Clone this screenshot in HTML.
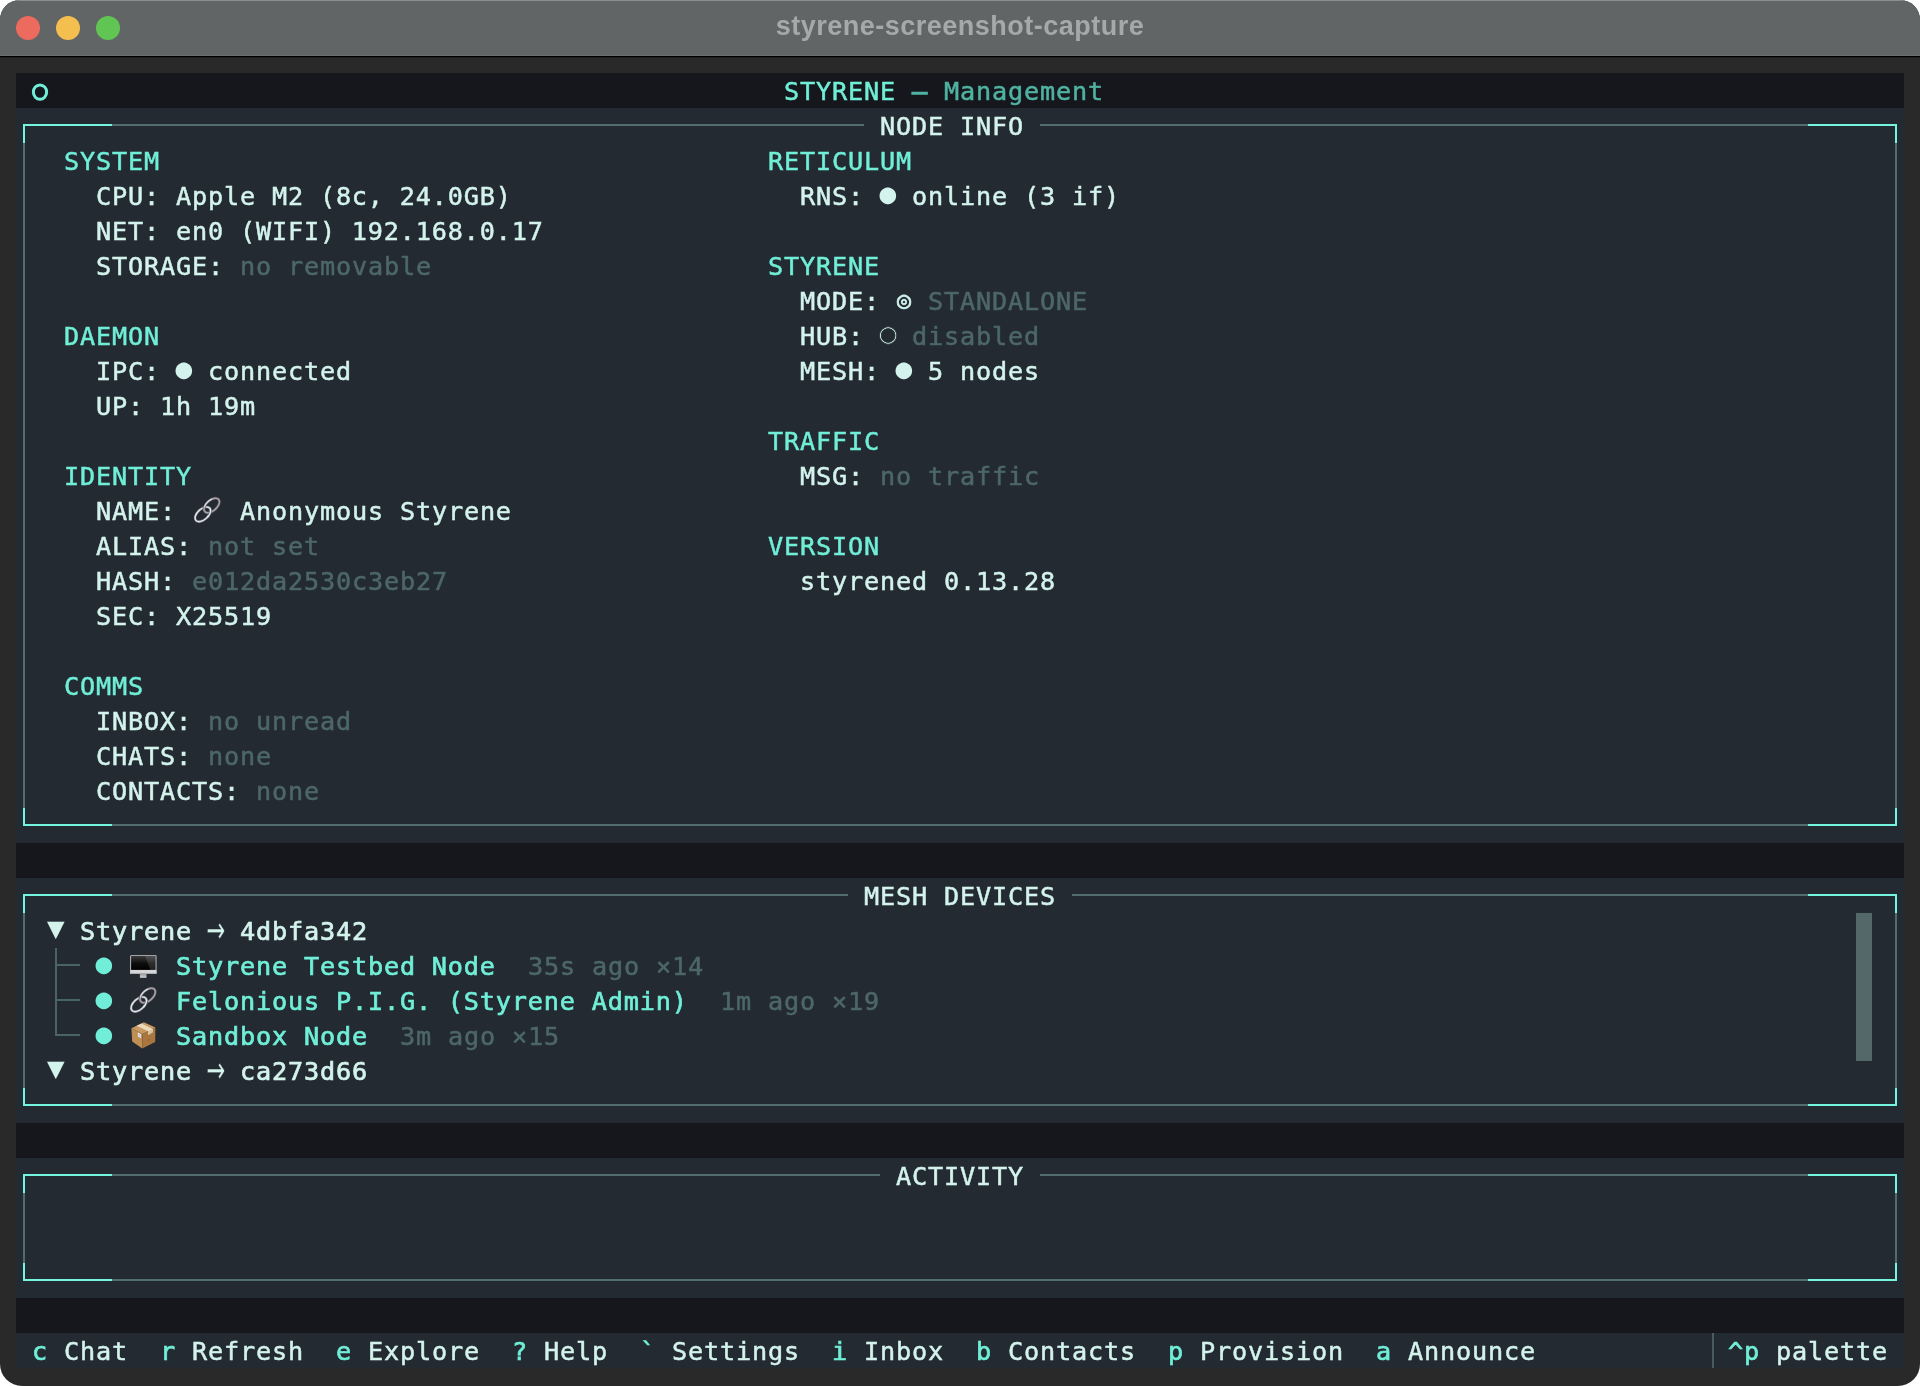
<!DOCTYPE html>
<html lang="en"><head><meta charset="utf-8"><title>styrene-screenshot-capture</title>
<style>
html,body{margin:0;padding:0;background:#fff}
body{width:1920px;height:1386px;overflow:hidden}
#win{position:absolute;left:0;top:0;width:1920px;height:1386px;background:#292929;border-radius:20px 20px 22px 22px;overflow:hidden}
#tb{position:absolute;left:0;top:0;width:1920px;height:56px;background:#616566;border-bottom:1px solid #000;box-shadow:inset 0 1px 0 #8d8f90,inset 0 -1px 0 #6b6f70}
#tb i{position:absolute;top:16px;width:24px;height:24px;border-radius:50%}
#ttl{position:absolute;left:0;top:0;width:1920px;height:56px;line-height:54px;text-align:center;font:bold 27px/53px "Liberation Sans",sans-serif;color:#a6a9aa;letter-spacing:0.5px;will-change:transform}
#term{position:absolute;left:16px;top:73px;width:1888px;height:1295px;background:#232a32;overflow:hidden;
 font-family:"DejaVu Sans Mono","Liberation Mono",monospace;font-size:25.2px;letter-spacing:0.828px;color:#d3f3ec}
.t{position:absolute;white-space:pre;height:35px;line-height:35px;margin-top:0.5px;-webkit-text-stroke:0.5px currentColor}
#txt{position:absolute;left:0;top:0;width:1888px;height:1295px;will-change:transform}
.cy{color:#70eed7}.cy2{color:#4fb3a2}.mu{color:#4d6768}
.b{-webkit-text-stroke:0.7px currentColor}
.s{-webkit-text-stroke:0;letter-spacing:0;margin-top:0.5px}
.dk{position:absolute;left:0;width:1888px;height:35px;background:#16171c}
.ab{position:absolute}
.pb{position:absolute;left:7px;width:1874px;border:2px solid #526d6e;box-sizing:border-box}
.cn{position:absolute;width:87px;height:17px;border:0 solid #74f5e0}
.tl{border-top-width:2px;border-left-width:2px}
.tr{border-top-width:2px;border-right-width:2px}
.bl{border-bottom-width:2px;border-left-width:2px;height:16px}
.br{border-bottom-width:2px;border-right-width:2px;height:16px}
.gap{position:absolute;height:10px;background:#232a32}
.gv{position:absolute;width:2px;background:#4a6465}
.gh{position:absolute;width:25px;height:2px;background:#4a6465}
</style></head><body>
<div id="win">
<div id="tb"><i style="left:16px;background:#ec6a5e"></i><i style="left:56px;background:#f4bf4f"></i><i style="left:96px;background:#61c554"></i></div>
<div id="ttl">styrene-screenshot-capture</div>
<div style="position:absolute;left:0;top:57px;width:1920px;height:1px;background:#1e1e1e"></div>
<div id="term">
<div class="dk" style="top:0px"></div>
<svg class="ab" style="left:14px;top:9px" width="20" height="21" viewBox="0 0 20 21"><ellipse cx="10" cy="10.1" rx="6.65" ry="7.15" fill="none" stroke="#70eed7" stroke-width="3"/></svg>
<div class="pb" style="top:51px;height:702px"></div>
<div class="cn tl" style="top:51px;left:7px"></div>
<div class="cn tr" style="top:51px;left:1792px"></div>
<div class="cn bl" style="top:735px;left:7px"></div>
<div class="cn br" style="top:735px;left:1792px"></div>
<div class="gap" style="left:848px;top:47px;width:176px"></div>
<div class="dk" style="top:770px"></div>
<div class="pb" style="top:821px;height:212px"></div>
<div class="cn tl" style="top:821px;left:7px"></div>
<div class="cn tr" style="top:821px;left:1792px"></div>
<div class="cn bl" style="top:1015px;left:7px"></div>
<div class="cn br" style="top:1015px;left:1792px"></div>
<div class="gap" style="left:832px;top:817px;width:224px"></div>
<div class="gv" style="left:39px;top:875px;height:88px"></div>
<div class="gh" style="left:39px;top:891px"></div>
<div class="gh" style="left:39px;top:926px"></div>
<div class="gh" style="left:39px;top:961px"></div>
<div class="ab" style="left:1840px;top:840px;width:16px;height:148px;background:#54686a"></div>
<div class="dk" style="top:1050px"></div>
<div class="pb" style="top:1101px;height:107px"></div>
<div class="cn tl" style="top:1101px;left:7px"></div>
<div class="cn tr" style="top:1101px;left:1792px"></div>
<div class="cn bl" style="top:1190px;left:7px"></div>
<div class="cn br" style="top:1190px;left:1792px"></div>
<div class="gap" style="left:864px;top:1097px;width:160px"></div>
<div class="dk" style="top:1225px"></div>
<div class="ab" style="left:1696px;top:1260px;width:2px;height:35px;background:#475c60"></div>
<svg class="ab" style="left:176.6px;top:423px" width="29" height="28" viewBox="-1 -1 29 28"><g fill="none"><g transform="translate(8.8 17.3) rotate(-42)"><ellipse rx="9.2" ry="5.3" stroke="#5b5a61" stroke-width="2.7"/><ellipse rx="9.2" ry="5.3" stroke="#dbe3ed" stroke-width="1.6"/></g><g transform="translate(17.7 8.5) rotate(-42)"><ellipse rx="9.2" ry="5.3" stroke="#5a4c4f" stroke-width="2.7"/><ellipse rx="9.2" ry="5.3" stroke="#a3a3ad" stroke-width="1.6"/><path d="M-6.5 -3.75A9.2 5.3 0 0 1 4.6 -4.59" stroke="#d5dbe6" stroke-width="1.3"/></g><g transform="translate(8.8 17.3) rotate(-42)"><path d="M2.4 5.12A9.2 5.3 0 0 0 9.2 0" stroke="#5b5a61" stroke-width="2.7"/><path d="M1.6 5.22A9.2 5.3 0 0 0 9.2 0" stroke="#e6edf5" stroke-width="1.6"/></g></g></svg>
<svg class="ab" style="left:113.0px;top:913px" width="29" height="28" viewBox="-1 -1 29 28"><g fill="none"><g transform="translate(8.8 17.3) rotate(-42)"><ellipse rx="9.2" ry="5.3" stroke="#5b5a61" stroke-width="2.7"/><ellipse rx="9.2" ry="5.3" stroke="#dbe3ed" stroke-width="1.6"/></g><g transform="translate(17.7 8.5) rotate(-42)"><ellipse rx="9.2" ry="5.3" stroke="#5a4c4f" stroke-width="2.7"/><ellipse rx="9.2" ry="5.3" stroke="#a3a3ad" stroke-width="1.6"/><path d="M-6.5 -3.75A9.2 5.3 0 0 1 4.6 -4.59" stroke="#d5dbe6" stroke-width="1.3"/></g><g transform="translate(8.8 17.3) rotate(-42)"><path d="M2.4 5.12A9.2 5.3 0 0 0 9.2 0" stroke="#5b5a61" stroke-width="2.7"/><path d="M1.6 5.22A9.2 5.3 0 0 0 9.2 0" stroke="#e6edf5" stroke-width="1.6"/></g></g></svg>
<svg class="ab" style="left:114px;top:881.7px" width="27" height="24" viewBox="0 0 27 24"><defs><linearGradient id="mg" x1="0" y1="0" x2="0" y2="1"><stop offset="0" stop-color="#3a3a3c"/><stop offset="0.55" stop-color="#0c0c0d"/><stop offset="1" stop-color="#000"/></linearGradient><linearGradient id="ms" x1="0" y1="0" x2="0" y2="1"><stop offset="0" stop-color="#9a9a9c"/><stop offset="1" stop-color="#d4d4d6"/></linearGradient></defs><rect x="0.2" y="0.2" width="26.3" height="18.6" rx="0.8" fill="#c9c9cb"/><rect x="1.1" y="1.0" width="24.5" height="13.9" fill="url(#mg)"/><path d="M15 1H25.6V14.9H20.5Z" fill="#fff" opacity="0.13"/><rect x="0.2" y="15.3" width="26.3" height="3.5" fill="#d9d9db"/><rect x="0.2" y="17.9" width="26.3" height="0.9" fill="#a9a9ab"/><rect x="9.9" y="18.8" width="6.6" height="4.0" fill="url(#ms)"/></svg>
<svg class="ab" style="left:114.80000000000001px;top:948.6px" width="25" height="27" viewBox="0 0 25 27"><path d="M0.4 6.3L12.9 0.3L24.4 5.6L11.6 11.9Z" fill="#c89a62"/><path d="M0.4 6.3L11.6 11.9L11.2 26.4L1.2 19.6Z" fill="#c08d55"/><path d="M11.6 11.9L24.4 5.6L24.2 19.9L11.2 26.4Z" fill="#a97640"/><path d="M5.6 3.8L10.4 1.5L21.8 6.9L21.6 10.6L17 12.9L17.2 9.3Z" fill="#ead9bb"/><path d="M17.2 9.3L21.8 6.9L21.6 10.6L17 12.9Z" fill="#d9c4a0"/><path d="M6.9 10.6L10.1 12.3L10 16.3L6.9 14.4Z" fill="#e9edf2"/><path d="M7.6 12L9.5 13L9.4 15L7.6 14Z" fill="#b9c6d6"/><path d="M17.3 17.6l1.2-0.7l0.1 1.6l-1.2 0.7z" fill="#8a5c2c"/></svg>
<div id="txt">
<span class="t cy" style="left:768px;top:0px">STYRENE</span>
<span class="t cy2" style="left:896px;top:0px;-webkit-text-stroke:1.3px currentColor">—</span>
<span class="t cy2" style="left:928px;top:0px">Management</span>
<span class="t " style="left:864px;top:35px">NODE INFO</span>
<span class="t cy" style="left:48px;top:70px">SYSTEM</span>
<span class="t " style="left:80px;top:105px">CPU: Apple M2 (8c, 24.0GB)</span>
<span class="t " style="left:80px;top:140px">NET: en0 (WIFI) 192.168.0.17</span>
<span class="t " style="left:80px;top:175px">STORAGE:</span>
<span class="t mu" style="left:224px;top:175px">no removable</span>
<span class="t cy" style="left:48px;top:245px">DAEMON</span>
<span class="t " style="left:80px;top:280px">IPC:</span>
<span class="t " style="left:192px;top:280px">connected</span>
<span class="t " style="left:80px;top:315px">UP: 1h 19m</span>
<span class="t cy" style="left:48px;top:385px">IDENTITY</span>
<span class="t " style="left:80px;top:420px">NAME:</span>
<span class="t " style="left:224px;top:420px">Anonymous Styrene</span>
<span class="t " style="left:80px;top:455px">ALIAS:</span>
<span class="t mu" style="left:192px;top:455px">not set</span>
<span class="t " style="left:80px;top:490px">HASH:</span>
<span class="t mu" style="left:176px;top:490px">e012da2530c3eb27</span>
<span class="t " style="left:80px;top:525px">SEC: X25519</span>
<span class="t cy" style="left:48px;top:595px">COMMS</span>
<span class="t " style="left:80px;top:630px">INBOX:</span>
<span class="t mu" style="left:192px;top:630px">no unread</span>
<span class="t " style="left:80px;top:665px">CHATS:</span>
<span class="t mu" style="left:192px;top:665px">none</span>
<span class="t " style="left:80px;top:700px">CONTACTS:</span>
<span class="t mu" style="left:240px;top:700px">none</span>
<span class="t cy" style="left:752px;top:70px">RETICULUM</span>
<span class="t " style="left:784px;top:105px">RNS:</span>
<span class="t " style="left:896px;top:105px">online (3 if)</span>
<span class="t cy" style="left:752px;top:175px">STYRENE</span>
<span class="t " style="left:784px;top:210px">MODE:</span>
<span class="t mu" style="left:912px;top:210px">STANDALONE</span>
<span class="t " style="left:784px;top:245px">HUB:</span>
<span class="t mu" style="left:896px;top:245px">disabled</span>
<span class="t " style="left:784px;top:280px">MESH:</span>
<span class="t " style="left:912px;top:280px">5 nodes</span>
<span class="t cy" style="left:752px;top:350px">TRAFFIC</span>
<span class="t " style="left:784px;top:385px">MSG:</span>
<span class="t mu" style="left:864px;top:385px">no traffic</span>
<span class="t cy" style="left:752px;top:455px">VERSION</span>
<span class="t " style="left:784px;top:490px">styrened 0.13.28</span>
<span class="t s " style="left:159.6px;top:277.2px;font-size:27.7px">●</span>
<span class="t s " style="left:863.6px;top:102.2px;font-size:27.7px">●</span>
<span class="t s " style="left:879.6px;top:277.2px;font-size:27.7px">●</span>
<span class="t s " style="left:863.45px;top:242.5px;font-size:28.9px;-webkit-text-stroke:0.8px #232a32">○</span>
<span class="t s " style="left:880.9px;top:208.5px;font-size:23.3px;-webkit-text-stroke:0.65px currentColor">◎</span>
<span class="t " style="left:848px;top:805px">MESH DEVICES</span>
<span class="t s " style="left:31.1px;top:837.5px;font-size:29.3px">▼</span>
<span class="t b" style="left:64px;top:840px">Styrene</span>
<span class="t b" style="left:224px;top:840px">4dbfa342</span>
<span class="t s " style="left:31.1px;top:977.5px;font-size:29.3px">▼</span>
<span class="t b" style="left:64px;top:980px">Styrene</span>
<span class="t b" style="left:224px;top:980px">ca273d66</span>
<span class="t s " style="left:191.8px;top:839.0px;font-size:25.2px;width:16px;text-align:center;transform:scale(1.22,1.9);transform-origin:8px 20.5px;-webkit-text-stroke:0.25px #232a32">→</span>
<span class="t s " style="left:191.8px;top:979.0px;font-size:25.2px;width:16px;text-align:center;transform:scale(1.22,1.9);transform-origin:8px 20.5px;-webkit-text-stroke:0.25px #232a32">→</span>
<span class="t s cy" style="left:79.6px;top:872.2px;font-size:27.7px">●</span>
<span class="t s cy" style="left:79.6px;top:907.2px;font-size:27.7px">●</span>
<span class="t s cy" style="left:79.6px;top:942.2px;font-size:27.7px">●</span>
<span class="t cy b" style="left:160px;top:875px">Styrene Testbed Node</span>
<span class="t mu" style="left:512px;top:875px">35s ago ×14</span>
<span class="t cy b" style="left:160px;top:910px">Felonious P.I.G. (Styrene Admin)</span>
<span class="t mu" style="left:704px;top:910px">1m ago ×19</span>
<span class="t cy b" style="left:160px;top:945px">Sandbox Node</span>
<span class="t mu" style="left:384px;top:945px">3m ago ×15</span>
<span class="t " style="left:880px;top:1085px">ACTIVITY</span>
<span class="t cy b" style="left:16px;top:1260px">c</span>
<span class="t " style="left:48px;top:1260px">Chat</span>
<span class="t cy b" style="left:144px;top:1260px">r</span>
<span class="t " style="left:176px;top:1260px">Refresh</span>
<span class="t cy b" style="left:320px;top:1260px">e</span>
<span class="t " style="left:352px;top:1260px">Explore</span>
<span class="t cy b" style="left:496px;top:1260px">?</span>
<span class="t " style="left:528px;top:1260px">Help</span>
<span class="t cy b" style="left:624px;top:1260px">`</span>
<span class="t " style="left:656px;top:1260px">Settings</span>
<span class="t cy b" style="left:816px;top:1260px">i</span>
<span class="t " style="left:848px;top:1260px">Inbox</span>
<span class="t cy b" style="left:960px;top:1260px">b</span>
<span class="t " style="left:992px;top:1260px">Contacts</span>
<span class="t cy b" style="left:1152px;top:1260px">p</span>
<span class="t " style="left:1184px;top:1260px">Provision</span>
<span class="t cy b" style="left:1360px;top:1260px">a</span>
<span class="t " style="left:1392px;top:1260px">Announce</span>
<span class="t cy b" style="left:1712px;top:1260px">^p</span>
<span class="t " style="left:1760px;top:1260px">palette</span>
</div>

</div>
</div>
</body></html>
